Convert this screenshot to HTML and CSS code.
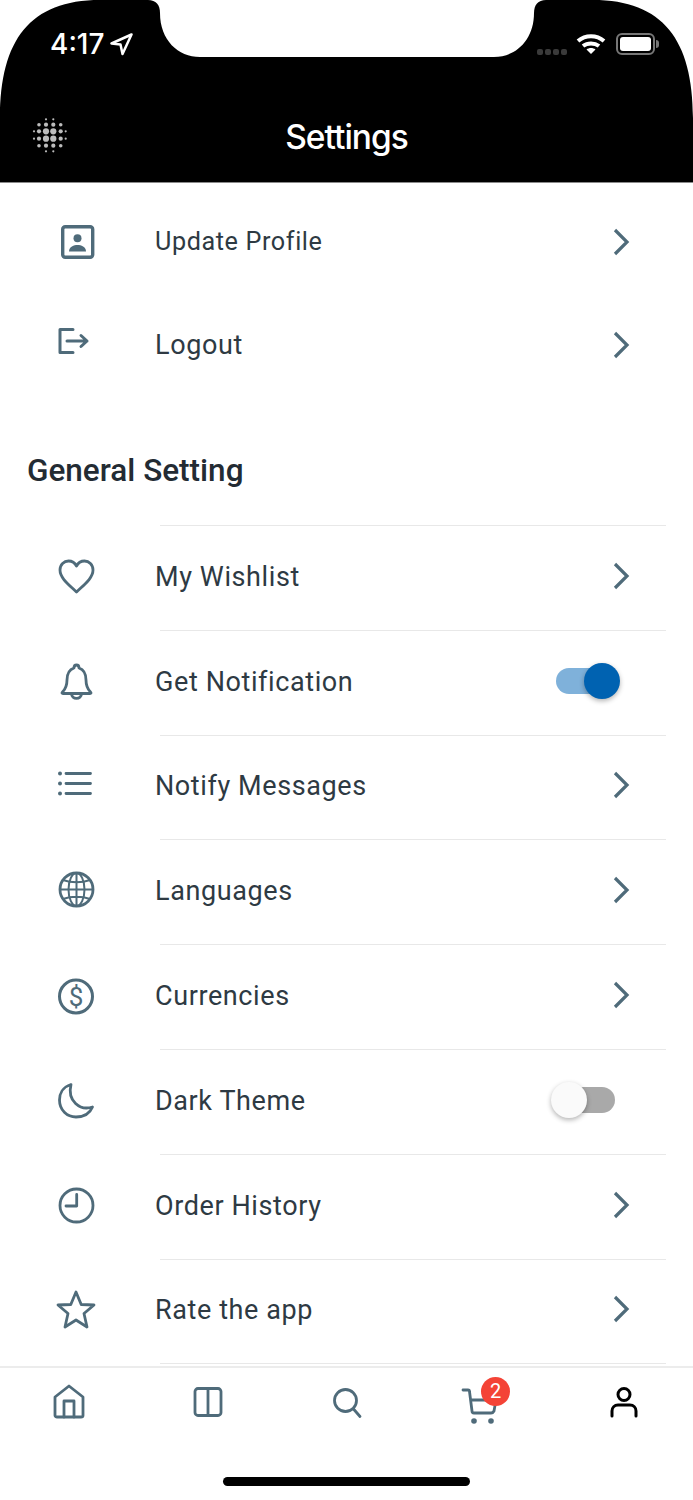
FILE: index.html
```html
<!DOCTYPE html>
<html lang="en">
<head>
    <meta charset="UTF-8">
    <meta name="viewport" content="width=device-width, initial-scale=1.0">
    <title>Settings</title>
    <link rel="stylesheet" href="styles.css">
</head>
<body>
    <div class="page">
        <header class="app-header">
            <svg class="header-shape" width="693" height="182" viewBox="0 0 693 182">
                <path d="M0 182V118C0 40 30 0 100 0H148C156 0 160 5 160 13C160 40 178 57 200 57H494C516 57 534 40 534 13C534 5 538 0 546 0H593C663 0 693 40 693 118V182Z"/>
            </svg>
            <div class="status-bar">
                <div class="status-left">
                    <span class="clock">4:17</span>
                    <svg width="24" height="24" viewBox="0 0 24 24" class="location"><path d="M22.500 2.500L2.500 11.500L11.500 12.500L13.500 22Z"/></svg>
                </div>
                <div class="status-right">
                    <div class="signal"><i></i><i></i><i></i><i></i></div>
                    <svg width="30" height="22" viewBox="0 0 30 22" class="wifi">
                        <path d="M2 8C9.500 1.500 20.500 1.500 28 8M7 13C11.500 9.500 18.500 9.500 23 13"/>
                        <path class="wifi-dot" d="M15 21L10.500 16.500C13 14.500 17 14.500 19.500 16.500Z"/>
                    </svg>
                    <div class="battery"><div class="battery-fill"></div></div>
                </div>
            </div>
            <div class="nav-row">
                <svg class="logo" width="40" height="40" viewBox="0 0 40 40">
                    <circle cx="16" cy="4.300" r="1.100"/><circle cx="23.300" cy="4.300" r="1.100"/>
                    <circle cx="9" cy="9.700" r="1.800"/><circle cx="16" cy="9.700" r="2.100"/><circle cx="23.300" cy="9.700" r="2.100"/><circle cx="30.700" cy="9.700" r="1.800"/>
                    <circle cx="4" cy="16.300" r="1.100"/><circle cx="9" cy="16.300" r="2.100"/><circle cx="16" cy="16.300" r="3.100"/><circle cx="23.300" cy="16.300" r="3.100"/><circle cx="30.700" cy="16.300" r="2.100"/><circle cx="35.700" cy="16.300" r="1.100"/>
                    <circle cx="4" cy="23.700" r="1.100"/><circle cx="9" cy="23.700" r="2.100"/><circle cx="16" cy="23.700" r="3.100"/><circle cx="23.300" cy="23.700" r="3.100"/><circle cx="30.700" cy="23.700" r="2.100"/><circle cx="35.700" cy="23.700" r="1.100"/>
                    <circle cx="9" cy="30.700" r="1.800"/><circle cx="16" cy="30.700" r="2.100"/><circle cx="23.300" cy="30.700" r="2.100"/><circle cx="30.700" cy="30.700" r="1.800"/>
                    <circle cx="16" cy="36.300" r="1.100"/><circle cx="23.300" cy="36.300" r="1.100"/>
                </svg>
                <h1 class="title">Settings</h1>
            </div>
        </header>

        <main class="content">
            <a class="row row-top">
                <svg class="icon" width="44" height="44" viewBox="0 0 44 44">
                    <rect x="8.700" y="6.700" width="30" height="30.600" rx="2.500" class="thick"/>
                    <circle cx="23.500" cy="18.300" r="4" class="solid"/>
                    <path d="M15 31.500C15 26.500 20 25 23.500 25S32 26.500 32 31.500Z" class="solid"/>
                </svg>
                <span class="label label-small">Update Profile</span>
                <svg class="chevron" width="24" height="28" viewBox="0 0 24 28"><path d="M5 2L17 14L5 26"/></svg>
            </a>
            <a class="row row-top">
                <svg class="icon" width="44" height="44" viewBox="0 0 44 44">
                    <path d="M19 6.500H6V29.500H19" class="medium"/>
                    <path d="M13 18H33M27 12.500L33 18L27 23.500" class="medium"/>
                </svg>
                <span class="label">Logout</span>
                <svg class="chevron" width="24" height="28" viewBox="0 0 24 28"><path d="M5 2L17 14L5 26"/></svg>
            </a>

            <h2 class="section-title">General Setting</h2>

            <hr class="divider">
            <a class="row">
                <svg class="icon" width="44" height="44" viewBox="0 0 44 44">
                    <path d="M22.500 37C16 30.500 6 23.500 6 15C6 9.500 10 6 14.500 6C18 6 21 8 22.500 11C24 8 27 6 30.500 6C35 6 39 9.500 39 15C39 23.500 29 30.500 22.500 37Z"/>
                </svg>
                <span class="label">My Wishlist</span>
                <svg class="chevron" width="24" height="28" viewBox="0 0 24 28"><path d="M5 2L17 14L5 26"/></svg>
            </a>
            <hr class="divider">
            <a class="row">
                <svg class="icon" width="44" height="44" viewBox="0 0 44 44">
                    <path d="M8.500 32C12 28.500 13 25 13 20C13 14 15.500 9.500 20 8C20 4 25 4 25 8C29.500 9.500 32 14 32 20C32 25 33 28.500 36.500 32C37.500 33 37 33.500 36 33.500H9C8 33.500 7.500 33 8.500 32Z"/>
                    <path d="M17.500 33.500C17.500 40 27.500 40 27.500 33.500"/>
                </svg>
                <span class="label">Get Notification</span>
                <div class="toggle toggle-on"><div class="track"></div><div class="thumb"></div></div>
            </a>
            <hr class="divider">
            <a class="row">
                <svg class="icon" width="44" height="44" viewBox="0 0 44 44">
                    <circle cx="6" cy="9.500" r="2" class="solid"/><circle cx="6" cy="19.500" r="2" class="solid"/><circle cx="6" cy="29.500" r="2" class="solid"/>
                    <path d="M12 9.500H36.500M12 19.500H36.500M12 29.500H36.500"/>
                </svg>
                <span class="label">Notify Messages</span>
                <svg class="chevron" width="24" height="28" viewBox="0 0 24 28"><path d="M5 2L17 14L5 26"/></svg>
            </a>
            <hr class="divider">
            <a class="row">
                <svg class="icon" width="44" height="44" viewBox="0 0 44 44">
                    <circle cx="22.500" cy="20.500" r="16.500"/>
                    <ellipse cx="22.500" cy="20.500" rx="8" ry="16.500" class="fine"/>
                    <path d="M22.500 4V37M6 20.500H39M9 11C17 14 28 14 36 11M9 30C17 27 28 27 36 30" class="fine"/>
                </svg>
                <span class="label">Languages</span>
                <svg class="chevron" width="24" height="28" viewBox="0 0 24 28"><path d="M5 2L17 14L5 26"/></svg>
            </a>
            <hr class="divider">
            <a class="row">
                <svg class="icon" width="44" height="44" viewBox="0 0 44 44">
                    <circle cx="22" cy="22.500" r="16.500" class="medium"/>
                    <text x="22" y="31.500" class="dollar">$</text>
                </svg>
                <span class="label">Currencies</span>
                <svg class="chevron" width="24" height="28" viewBox="0 0 24 28"><path d="M5 2L17 14L5 26"/></svg>
            </a>
            <hr class="divider">
            <a class="row">
                <svg class="icon" width="44" height="44" viewBox="0 0 44 44">
                    <path d="M17 5.500C8.500 8 5.500 15 5.500 21C5.500 31 13 38 22 38C30 38 36 34 38.500 28C26 32 13 22 17 5.500Z"/>
                </svg>
                <span class="label">Dark Theme</span>
                <div class="toggle"><div class="track"></div><div class="thumb"></div></div>
            </a>
            <hr class="divider">
            <a class="row">
                <svg class="icon" width="44" height="44" viewBox="0 0 44 44">
                    <circle cx="22.500" cy="21.500" r="16.500"/>
                    <path d="M22.700 10.500V22H12"/>
                </svg>
                <span class="label">Order History</span>
                <svg class="chevron" width="24" height="28" viewBox="0 0 24 28"><path d="M5 2L17 14L5 26"/></svg>
            </a>
            <hr class="divider">
            <a class="row">
                <svg class="icon" width="44" height="44" viewBox="0 0 44 44">
                    <path d="M22 4L27.200 16.500L40 17L30 25.500L33 39L22 32L11 39L14 25.500L4 17L16.800 16.500Z"/>
                </svg>
                <span class="label">Rate the app</span>
                <svg class="chevron" width="24" height="28" viewBox="0 0 24 28"><path d="M5 2L17 14L5 26"/></svg>
            </a>
            <hr class="divider">
        </main>

        <nav class="tab-bar">
            <a class="tab">
                <svg class="icon" width="36" height="40" viewBox="0 0 36 40">
                    <path d="M4 32.500V14L18 3L32 14V32.500C32 33.500 31 34 30 34H6C5 34 4 33.500 4 32.500Z"/>
                    <path d="M13 34V18H23V34"/>
                </svg>
            </a>
            <a class="tab">
                <svg class="icon" width="36" height="40" viewBox="0 0 36 40">
                    <rect x="5" y="5.500" width="26" height="27" rx="3"/>
                    <path d="M18 5.500V32.500"/>
                </svg>
            </a>
            <a class="tab">
                <svg class="icon" width="36" height="40" viewBox="0 0 36 40">
                    <circle cx="17.500" cy="17.500" r="11"/>
                    <path d="M25.500 26L32 33.500"/>
                </svg>
            </a>
            <a class="tab">
                <div class="cart">
                    <svg class="icon" width="40" height="40" viewBox="0 0 40 40">
                        <path d="M3 5H8C9 5 9.500 5.500 9.500 6.500L12 26C12 27.500 13 28 14 28H31C33 28 33.500 27 34 26L36 15H10.500"/>
                        <circle cx="14" cy="36" r="2.800" class="solid"/><circle cx="31" cy="36" r="2.800" class="solid"/>
                    </svg>
                    <span class="badge">2</span>
                </div>
            </a>
            <a class="tab">
                <svg class="icon icon-active" width="36" height="40" viewBox="0 0 36 40">
                    <circle cx="18" cy="11.500" r="6"/>
                    <path d="M6 33V28C6 24.500 8.500 22 12 22H24C27.500 22 30 24.500 30 28V33"/>
                </svg>
            </a>
        </nav>
        <div class="home-area"><div class="home-indicator"></div></div>
    </div>
</body>
</html>
```

FILE: styles.css
```css
html, body {
    margin: 0;
    padding: 0;
    background: white;
}

.page {
    width: 693px;
    height: 1500px;
    display: flex;
    flex-direction: column;
    overflow: hidden;
    font-family: 'Roboto', sans-serif;
    color: #2e3a43;
}

.app-header {
    position: relative;
    flex-shrink: 0;
    height: 182px;
    box-sizing: border-box;
    padding-top: 33px;
    box-shadow: 0 1px 0 #8a8a8a;
    color: white;
}

.header-shape {
    position: absolute;
    left: 0;
    top: 0;
    fill: black;
}

.status-bar {
    position: relative;
    display: flex;
    justify-content: space-between;
    height: 22px;
    padding: 0 38px 0 50px;
}

.status-left {
    display: flex;
    align-items: center;
    gap: 5px;
}

.clock {
    font-family: 'Inter', sans-serif;
    font-size: 28px;
    font-weight: 500;
    line-height: 22px;
}

.location path {
    fill: none;
    stroke: white;
    stroke-width: 2.500;
    stroke-linejoin: round;
}

.status-right {
    display: flex;
    align-items: center;
}

.signal {
    display: flex;
    gap: 2px;
    margin: 15px 9px 0 0;
}

.signal i {
    width: 6px;
    height: 6px;
    border-radius: 2px;
    background: #3a3a3a;
}

.wifi {
    margin-right: 10px;
}

.wifi path {
    fill: none;
    stroke: white;
    stroke-width: 4;
}

.wifi .wifi-dot {
    fill: white;
    stroke: none;
}

.battery {
    position: relative;
    width: 39px;
    height: 22px;
    box-sizing: border-box;
    border: 2px solid #777;
    border-radius: 6px;
    padding: 2px;
}

.battery::after {
    content: "";
    position: absolute;
    right: -6px;
    top: 5px;
    width: 3px;
    height: 8px;
    border-radius: 0 3px 3px 0;
    background: #777;
}

.battery-fill {
    height: 100%;
    border-radius: 3px;
    background: white;
}

.nav-row {
    position: relative;
    display: grid;
    grid-template-columns: 1fr auto 1fr;
    align-items: center;
    height: 40px;
    margin-top: 58px;
    padding-left: 30px;
    padding-right: 30px;
}

.logo {
    fill: #bcbcbc;
}

.title {
    grid-column: 2;
    grid-row: 1;
    margin: 4px 0 0 0;
    font-family: 'Inter', sans-serif;
    font-size: 33.500px;
    font-weight: 500;
    line-height: 40px;
    letter-spacing: -1px;
}

.content {
    flex: 1;
    min-height: 0;
    overflow: hidden;
    padding-top: 8px;
}

.row {
    display: flex;
    align-items: center;
    height: 103.800px;
    box-sizing: border-box;
    padding: 0 59px 2px 54px;
}

.row-top {
    height: 103.500px;
    padding-bottom: 0;
}

.icon {
    flex-shrink: 0;
    fill: none;
    stroke: #4f6b7a;
    stroke-width: 2.800;
    stroke-linecap: round;
    stroke-linejoin: round;
}

.icon .solid {
    fill: #4f6b7a;
    stroke: none;
}

.icon .thick {
    stroke-width: 3.400;
}

.icon .medium {
    stroke-width: 3;
}

.icon .fine {
    stroke-width: 2;
}

.icon .dollar {
    fill: #4f6b7a;
    stroke: none;
    font-family: 'Roboto', sans-serif;
    font-size: 26px;
    text-anchor: middle;
}

.icon-active {
    stroke: black;
    stroke-width: 3;
}

.label {
    flex: 1;
    margin-left: 57px;
    font-size: 27px;
    line-height: 36px;
    letter-spacing: 0.600px;
}

.label-small {
    font-size: 25.200px;
}

.chevron {
    flex-shrink: 0;
    margin-bottom: 2px;
    fill: none;
    stroke: #4f6b7a;
    stroke-width: 3.200;
}

.row-top .chevron {
    margin-bottom: 0;
}

.section-title {
    margin: 0;
    padding: 56px 0 36px 27px;
    font-size: 31.500px;
    font-weight: 500;
    line-height: 36px;
    color: #232b33;
}

.divider {
    height: 1px;
    margin: 0 27px 0 160px;
    border: 0;
    background: #e8e8e8;
}

.toggle {
    position: relative;
    flex-shrink: 0;
    width: 70px;
    height: 36px;
    margin: 0 13px 2px 0;
}

.track {
    position: absolute;
    left: 5px;
    top: 5px;
    width: 59px;
    height: 26px;
    border-radius: 13px;
    background: #a9a9a9;
}

.thumb {
    position: absolute;
    left: 0;
    top: 0;
    width: 36px;
    height: 36px;
    border-radius: 50%;
    background: #fafafa;
    box-shadow: 0 2px 5px rgba(0,0,0,0.3);
}

.toggle-on .track {
    background: #7fb1da;
}

.toggle-on .thumb {
    left: 33px;
    background: #0062b1;
}

.tab-bar {
    flex-shrink: 0;
    display: grid;
    grid-template-columns: repeat(5, 1fr);
    height: 93px;
    box-sizing: border-box;
    padding: 15px 0 0 0;
    border-top: 2px solid #ececec;
}

.tab {
    display: flex;
    justify-content: center;
}

.cart {
    position: relative;
    height: 40px;
    margin: 2px 10px 0 0;
}

.badge {
    position: absolute;
    left: 21px;
    top: -8px;
    width: 29px;
    height: 29px;
    border-radius: 50%;
    background: #f44336;
    color: white;
    font-size: 20px;
    line-height: 29px;
    text-align: center;
}

.home-area {
    flex-shrink: 0;
    height: 41px;
    display: flex;
    justify-content: center;
}

.home-indicator {
    width: 247px;
    height: 9px;
    margin-top: 18px;
    border-radius: 5px;
    background: black;
}
```
